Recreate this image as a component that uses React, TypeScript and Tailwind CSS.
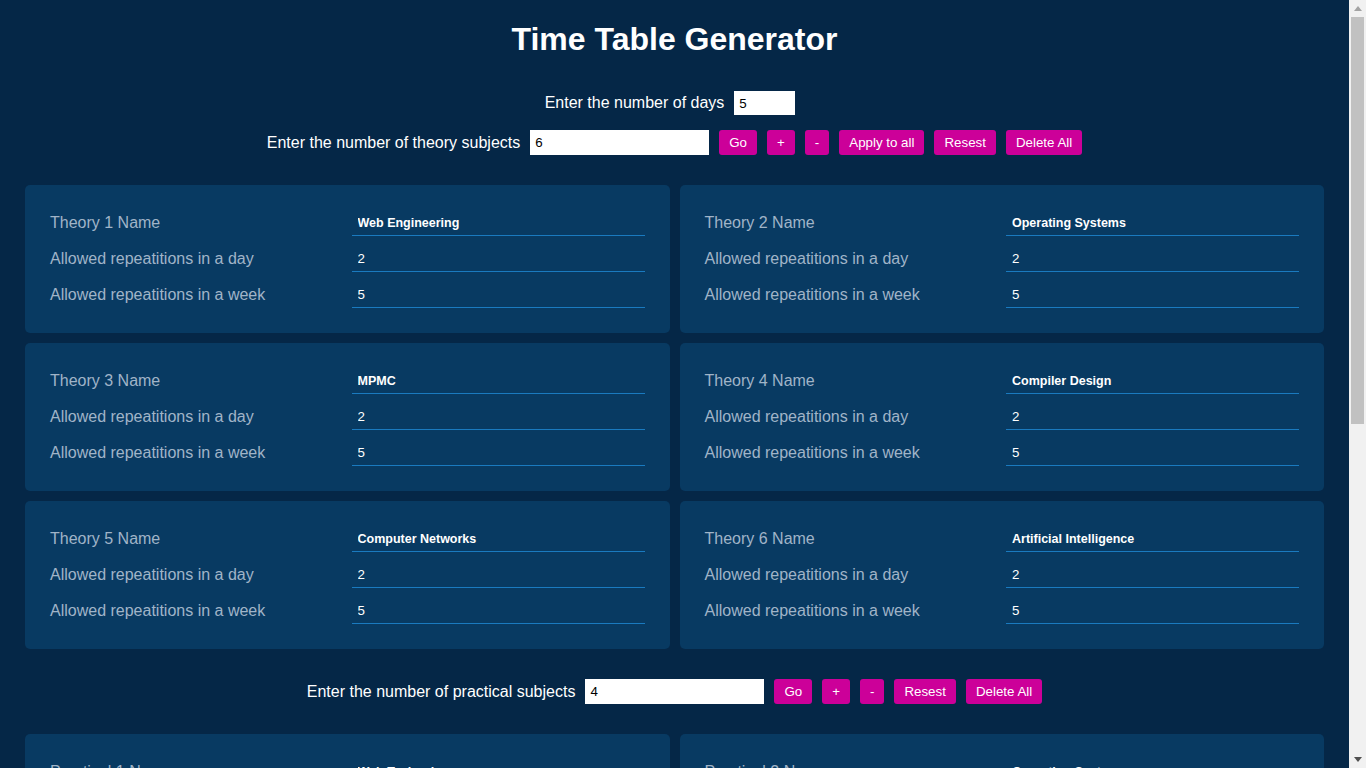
import React, { useState } from 'react';

interface Subject {
  name: string;
  perDay: number;
  perWeek: number;
}

const initialTheory: Subject[] = [
  { name: 'Web Engineering', perDay: 2, perWeek: 5 },
  { name: 'Operating Systems', perDay: 2, perWeek: 5 },
  { name: 'MPMC', perDay: 2, perWeek: 5 },
  { name: 'Compiler Design', perDay: 2, perWeek: 5 },
  { name: 'Computer Networks', perDay: 2, perWeek: 5 },
  { name: 'Artificial Intelligence', perDay: 2, perWeek: 5 },
];

const initialPractical: Subject[] = [
  { name: 'Web Technology', perDay: 1, perWeek: 2 },
  { name: 'Operating Systems', perDay: 1, perWeek: 2 },
  { name: 'MPMC', perDay: 1, perWeek: 2 },
  { name: 'Compiler Design', perDay: 1, perWeek: 2 },
];

const Btn: React.FC<{ label: string }> = ({ label }) => (
  <button className="h-[25px] px-[10px] rounded-[3px] bg-[#cc0099] text-white text-[13.333px] leading-none">
    {label}
  </button>
);

const Field: React.FC<{ label: string; value: string | number; bold?: boolean }> = ({ label, value, bold }) => (
  <div className="flex items-end h-[36px]">
    <label className="flex-1 text-[16px] leading-[24px] text-[#a0b4c8] pb-[1px]">{label}</label>
    <input
      defaultValue={value}
      className={`w-[293px] h-[30px] bg-transparent border-b border-[#1a7abf] px-[6px] pt-[4px] text-white outline-none ${bold ? 'font-bold text-[12.5px]' : 'text-[13.333px]'}`}
    />
  </div>
);

const SubjectCard: React.FC<{ kind: string; index: number; subject: Subject }> = ({ kind, index, subject }) => (
  <div className="bg-[#083a62] rounded-[5px] px-[25px] pt-[15px] pb-[25px]">
    <Field label={`${kind} ${index} Name`} value={subject.name} bold />
    <Field label="Allowed repeatitions in a day" value={subject.perDay} />
    <Field label="Allowed repeatitions in a week" value={subject.perWeek} />
  </div>
);

const CountRow: React.FC<{ label: string; value: number; applyAll?: boolean }> = ({ label, value, applyAll }) => (
  <div className="flex items-center justify-center gap-[10px]">
    <span className="text-[16px] text-white">{label}</span>
    <input defaultValue={value} className="w-[179px] h-[25px] bg-white text-black text-[13.333px] px-[5px] outline-none" />
    <Btn label="Go" />
    <Btn label="+" />
    <Btn label="-" />
    {applyAll && <Btn label="Apply to all" />}
    <Btn label="Resest" />
    <Btn label="Delete All" />
  </div>
);

// window scrollbar, drawn since the screenshot hides the real one
const ScrollStrip: React.FC = () => (
  <div className="sticky top-0 h-screen w-[17px] shrink-0 bg-[#f1f1f1] flex flex-col items-center">
    <div className="h-[17px] flex items-center justify-center">
      <svg width="8" height="5" viewBox="0 0 8 5"><path d="M4 0 L8 5 L0 5 Z" fill="#a3a3a3" /></svg>
    </div>
    <div className="w-[13px] h-[407px] bg-[#c1c1c1]" />
    <div className="flex-1" />
    <div className="h-[17px] flex items-center justify-center">
      <svg width="8" height="5" viewBox="0 0 8 5"><path d="M0 0 L8 0 L4 5 Z" fill="#505050" /></svg>
    </div>
  </div>
);

export default function App() {
  const [theory] = useState(initialTheory);
  const [practical] = useState(initialPractical);

  return (
    <div className="flex items-start bg-[#052747]" style={{ fontFamily: '"Liberation Sans", Arial, sans-serif' }}>
      <main className="w-[1349px] shrink-0 min-h-screen pb-[40px]">
        <h1 className="text-center text-white font-bold text-[32px] leading-none pt-[23px]">Time Table Generator</h1>

        <div className="flex items-center justify-center gap-[10px] mt-[36px] pr-[9px]">
          <span className="text-[16px] text-white">Enter the number of days</span>
          <input defaultValue={5} className="w-[61px] h-[24px] bg-white text-black text-[13.333px] px-[5px] outline-none" />
        </div>

        <div className="mt-[15px]">
          <CountRow label="Enter the number of theory subjects" value={theory.length} applyAll />
        </div>

        <div className="grid grid-cols-2 gap-[10px] px-[25px] mt-[30px]">
          {theory.map((s, i) => (
            <SubjectCard key={i} kind="Theory" index={i + 1} subject={s} />
          ))}
        </div>

        <div className="mt-[30px]">
          <CountRow label="Enter the number of practical subjects" value={practical.length} />
        </div>

        <div className="grid grid-cols-2 gap-[10px] px-[25px] mt-[30px]">
          {practical.map((s, i) => (
            <SubjectCard key={i} kind="Practical" index={i + 1} subject={s} />
          ))}
        </div>
      </main>
      <ScrollStrip />
    </div>
  );
}
